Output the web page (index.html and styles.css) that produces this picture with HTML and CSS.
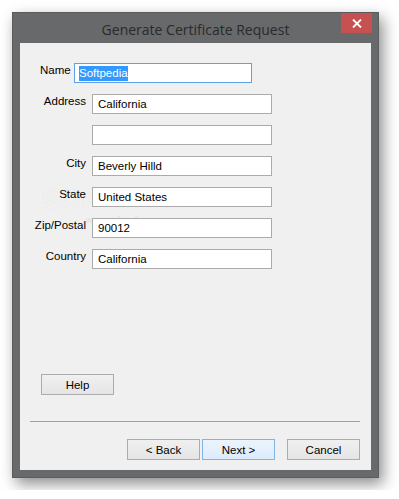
FILE: index.html
```html
<!DOCTYPE html>
<html lang="en">
<head>
    <meta charset="UTF-8">
    <title>Generate Certificate Request</title>
    <link rel="stylesheet" href="styles.css">
</head>
<body>
    <!-- Dialog window -->
    <div class="window">
        <div class="titlebar">
            <span class="title">Generate Certificate Request</span>
            <button class="close-btn" aria-label="Close">
                <svg width="10" height="9" viewBox="0 0 10 9">
                    <path d="M1 0.5 L9 8.5 M9 0.5 L1 8.5" stroke="#fff" stroke-width="1.8" fill="none"/>
                </svg>
            </button>
        </div>

        <div class="client">
            <!-- Watermark -->
            <div class="watermark">SOFTPEDIA<sup>™</sup></div>
            <div class="watermark-url">www.softpedia.com</div>

            <!-- Form fields -->
            <div class="form">
                <div class="row row-name">
                    <label class="label-name">Name</label>
                    <div class="field field-name focused"><span class="selected">Softpedia</span></div>
                </div>
                <div class="row">
                    <label>Address</label>
                    <div class="field">California</div>
                </div>
                <div class="row">
                    <label></label>
                    <div class="field"></div>
                </div>
                <div class="row">
                    <label>City</label>
                    <div class="field">Beverly Hilld</div>
                </div>
                <div class="row">
                    <label>State</label>
                    <div class="field">United States</div>
                </div>
                <div class="row">
                    <label>Zip/Postal</label>
                    <div class="field">90012</div>
                </div>
                <div class="row">
                    <label>Country</label>
                    <div class="field">California</div>
                </div>
            </div>

            <div class="help-row">
                <button class="btn">Help</button>
            </div>

            <div class="separator"></div>

            <div class="actions">
                <button class="btn">&lt; Back</button>
                <button class="btn btn-default">Next &gt;</button>
                <button class="btn btn-cancel">Cancel</button>
            </div>
        </div>
    </div>
</body>
</html>
```

FILE: styles.css
```css
/* General */
body {
    margin: 0;
    padding: 12px;
    background-color: #ffffff;
    font-family: "Liberation Sans", Arial, sans-serif;
    font-size: 11.5px;
    color: #000;
}

/* Window frame */
.window {
    width: 367px;
    height: 466px;
    box-sizing: border-box;
    background-color: #68696b;
    border: 1px solid #5a5b5d;
    padding: 0 7px 7px 7px;
    display: flex;
    flex-direction: column;
    box-shadow: 4px 6px 14px rgba(0, 0, 0, 0.45);
}

.titlebar {
    height: 30px;
    position: relative;
    display: flex;
    justify-content: center;
    align-items: center;
}

.title {
    font-family: "Open Sans", sans-serif;
    font-size: 14px;
    color: #2a2a2a;
    padding-top: 2px;
}

.close-btn {
    position: absolute;
    top: 0;
    right: -1px;
    width: 31px;
    height: 20px;
    border: none;
    padding: 0;
    background-color: #c75050;
    display: flex;
    align-items: center;
    justify-content: center;
}

/* Client area */
.client {
    flex: 1;
    background-color: #f0f0f0;
    display: flex;
    flex-direction: column;
    padding: 20px 11px 10px 0;
    position: relative;
}

.form {
    display: flex;
    flex-direction: column;
    gap: 11px;
    position: relative;
}

.row {
    display: flex;
    height: 20px;
}

.row label {
    width: 66px;
    text-align: right;
    margin-right: 6px;
    line-height: 14px;
}

.row-name label.label-name {
    width: 30px;
    margin-left: 20px;
    text-align: left;
    margin-right: 4px;
}

.field {
    width: 180px;
    height: 20px;
    box-sizing: border-box;
    border: 1px solid #ababab;
    background-color: #fff;
    padding-left: 5px;
    line-height: 18px;
    white-space: nowrap;
}

.field-name {
    width: 178px;
    padding-left: 4px;
}

.field.focused {
    border-color: #5da2e8;
}

.selected {
    background-color: #3399ff;
    color: #fff;
    display: inline-block;
    line-height: 15px;
}

/* Buttons */
.btn {
    width: 73px;
    height: 21px;
    box-sizing: border-box;
    border: 1px solid #acacac;
    background: linear-gradient(#f0f0f0, #e5e5e5);
    font-family: "Liberation Sans", Arial, sans-serif;
    font-size: 11.5px;
    color: #000;
    padding: 0;
}

.btn-default {
    border-color: #7eb4ea;
    background: linear-gradient(#ecf4fc, #dcecfc);
}

.help-row {
    margin-top: 105px;
    padding-left: 21px;
}

.separator {
    margin: 26px 0 0 10px;
    height: 1px;
    background-color: #a0a0a0;
}

.actions {
    margin-top: 17px;
    display: flex;
    justify-content: flex-end;
    gap: 2px;
}

.btn-cancel {
    margin-left: 10px;
}

/* Watermark overlay */
.watermark {
    position: absolute;
    left: 22px;
    top: 142px;
    font-size: 25px;
    font-weight: bold;
    letter-spacing: 2px;
    color: rgba(255, 255, 255, 0.6);
    text-shadow: 0 0 1px rgba(170, 170, 170, 0.3);
}

.watermark sup {
    font-size: 8px;
    color: rgba(170, 170, 170, 0.4);
}

.watermark-url {
    position: absolute;
    left: 66px;
    top: 172px;
    font-size: 9px;
    color: rgba(170, 170, 170, 0.3);
}
```
